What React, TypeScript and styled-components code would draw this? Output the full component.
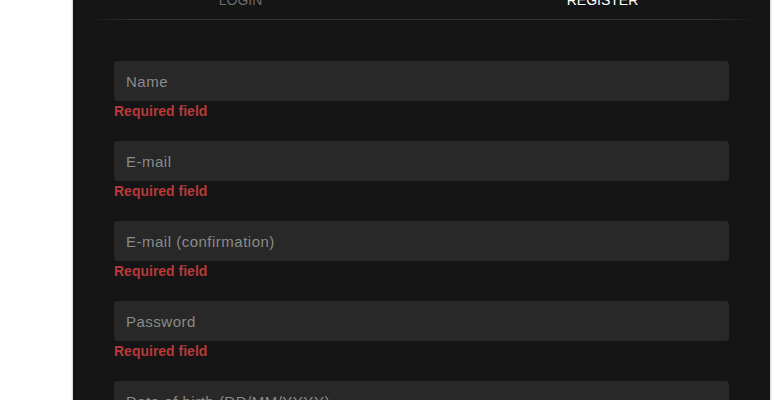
import React from 'react';
import styled, { createGlobalStyle } from 'styled-components';

const GlobalStyle = createGlobalStyle`
    html, body {
        margin: 0;
        padding: 0;
        background: #ffffff;
        overflow: hidden;
    }
    * {
        box-sizing: border-box;
    }
`;

const Panel = styled.div`
    width: 697px;
    margin: -20px 0 0 73px;
    padding: 12px 0 60px;
    background-color: #151515;
    box-shadow: 0 0 2px rgba(0, 0, 0, 0.45);
    font-family: "Liberation Sans", Arial, sans-serif;
`;

const Tabs = styled.div`
    display: flex;
    justify-content: center;
    gap: 182px;
    margin: 0 14px;
    padding-bottom: 12px;
    position: relative;

    &::after {
        content: '';
        position: absolute;
        left: 0;
        right: 0;
        bottom: 0;
        height: 1px;
        background: linear-gradient(to right, rgba(60, 60, 60, 0) 0%, #353535 8%, #353535 92%, rgba(60, 60, 60, 0) 100%);
    }
`;

const Tab = styled.div<{ active?: boolean }>`
    width: 180px;
    text-align: center;
    font-size: 14px;
    line-height: 16px;
    color: ${(props) => props.active ? '#ffffff' : '#6a6a6a'};
    text-transform: uppercase;
`;

const Form = styled.form`
    display: flex;
    flex-direction: column;
    gap: 22px;
    padding: 41px 41px 0;
`;

const Field = styled.div`
    display: flex;
    flex-direction: column;
`;

const Input = styled.input`
    height: 40px;
    width: 100%;
    padding: 0 12px;
    border: none;
    border-radius: 4px;
    outline: none;
    background-color: #282828;
    color: #dddddd;
    font-family: "Liberation Sans", Arial, sans-serif;
    font-size: 15px;
    letter-spacing: 0.5px;

    &::placeholder {
        color: #8a8a8a;
        opacity: 1;
    }
`;

const Error = styled.div`
    margin-top: 2px;
    font-size: 14px;
    line-height: 16px;
    font-weight: bold;
    color: #b83a3a;
`;

const fields = [
    { name: 'name', placeholder: 'Name', type: 'text' },
    { name: 'email', placeholder: 'E-mail', type: 'email' },
    { name: 'email2', placeholder: 'E-mail (confirmation)', type: 'email' },
    { name: 'password', placeholder: 'Password', type: 'password' },
    { name: 'dob', placeholder: 'Date of birth (DD/MM/YYYY)', type: 'text' },
];

const App = () => {
    return (
        <>
            <GlobalStyle />
            <Panel>
                <Tabs>
                    <Tab>Login</Tab>
                    <Tab active>Register</Tab>
                </Tabs>
                <Form onSubmit={(e) => e.preventDefault()}>
                    { fields.map((f) => (
                        <Field key={f.name}>
                            <Input name={f.name} type={f.type} placeholder={f.placeholder} />
                            <Error>Required field</Error>
                        </Field>
                    )) }
                </Form>
            </Panel>
        </>
    );
}

export default App;
